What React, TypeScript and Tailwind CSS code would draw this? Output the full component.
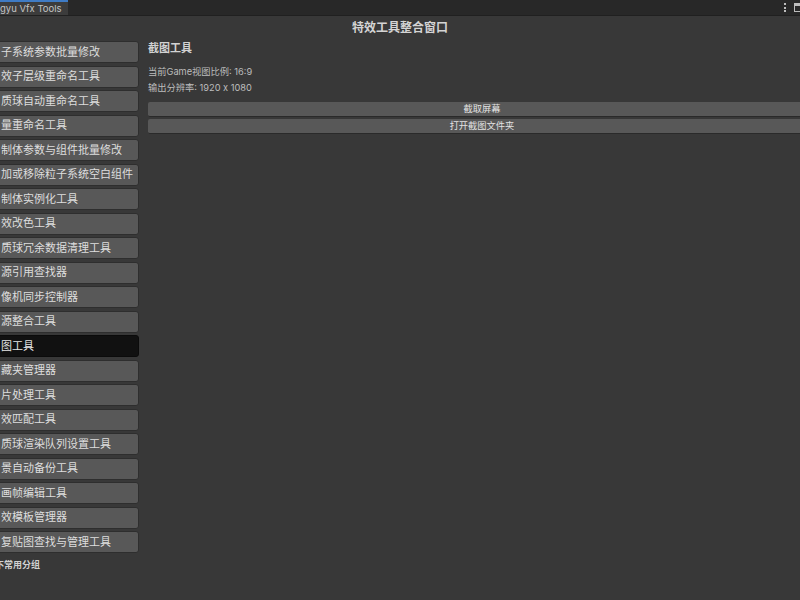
import React from 'react';

// labels as they sit in the scrolled list (first glyph scrolled out of view)
const tools = [
  '子系统参数批量修改',
  '效子层级重命名工具',
  '质球自动重命名工具',
  '量重命名工具',
  '制体参数与组件批量修改',
  '加或移除粒子系统空白组件',
  '制体实例化工具',
  '效改色工具',
  '质球冗余数据清理工具',
  '源引用查找器',
  '像机同步控制器',
  '源整合工具',
  '图工具',
  '藏夹管理器',
  '片处理工具',
  '效匹配工具',
  '质球渲染队列设置工具',
  '景自动备份工具',
  '画帧编辑工具',
  '效模板管理器',
  '复贴图查找与管理工具',
];

const font = "font-['Inter','Noto_Sans_CJK_SC',sans-serif]";

const ToolButton: React.FC<{ label: string; active?: boolean }> = ({ label, active }) => (
  <div
    className={`h-[22px] mb-[2.5px] flex items-center pl-[14px] rounded-[3px] border whitespace-nowrap text-[11px] ${
      active
        ? 'bg-[#111111] border-[#0b0b0b] text-[#e6e6e6]'
        : 'bg-[#585858] border-[#2e2e2e] text-[#dedede]'
    }`}
  >
    {label}
  </div>
);

const WideButton: React.FC<{ label: string }> = ({ label }) => (
  <div className="w-[668px] h-[15px] mb-[2px] flex items-center justify-center rounded-[2px] bg-[#585858] border-b border-[#2a2a2a] text-[9.25px] text-[#e2e2e2] leading-none">
    {label}
  </div>
);

export default function App() {
  return (
    <div className={`w-[800px] h-[600px] overflow-hidden bg-[#383838] ${font} flex flex-col`}>
      {/* tab strip */}
      <div className="h-[16px] bg-[#282828] border-b border-[#202020] flex items-stretch shrink-0">
        <div className="w-[68px] bg-[#3c3c3c] border-t-2 border-[#3f7bc4] flex items-center text-[9.5px] text-[#c4c4c4] leading-none whitespace-nowrap">
          gyu Vfx Tools
        </div>
        <div className="flex-1" />
        <div className="flex items-center gap-[8px]">
          <div className="flex flex-col gap-[1.5px] items-center">
            <span className="w-[2px] h-[2px] bg-[#bdbdbd]" />
            <span className="w-[2px] h-[2px] bg-[#bdbdbd]" />
            <span className="w-[2px] h-[2px] bg-[#bdbdbd]" />
          </div>
          <div className="w-[6px] h-[9px] border border-[#bdbdbd] border-t-[3px] border-r-0" />
        </div>
      </div>

      <div className="h-[24px] flex items-center justify-center shrink-0 text-[12px] font-bold text-[#d4d4d4]">
        特效工具整合窗口
      </div>

      <div className="flex flex-1 min-h-0">
        {/* tool list */}
        <div className="w-[140px] shrink-0 overflow-hidden pt-[1px]">
          <div className="-ml-[14px] w-[153px]">
            {tools.map((t) => (
              <ToolButton key={t} label={t} active={t === '图工具'} />
            ))}
            <div className="h-[18px] flex items-center pl-[9px] text-[9px] font-bold text-[#d2d2d2] whitespace-nowrap">
              不常用分组
            </div>
          </div>
        </div>

        {/* screenshot panel */}
        <div className="ml-[8px] flex-1 min-w-0 pt-[1px]">
          <div className="h-[15px] flex items-center text-[11px] font-bold text-[#d2d2d2]">截图工具</div>
          <div className="mt-[8px] h-[16px] flex items-center text-[9.25px] text-[#bdbdbd] whitespace-nowrap">
            当前Game视图比例: 16:9
          </div>
          <div className="h-[16px] flex items-center text-[9.25px] text-[#bdbdbd] whitespace-nowrap">
            输出分辨率: 1920 x 1080
          </div>
          <div className="mt-[6px]">
            <WideButton label="截取屏幕" />
            <WideButton label="打开截图文件夹" />
          </div>
        </div>
      </div>
    </div>
  );
}
